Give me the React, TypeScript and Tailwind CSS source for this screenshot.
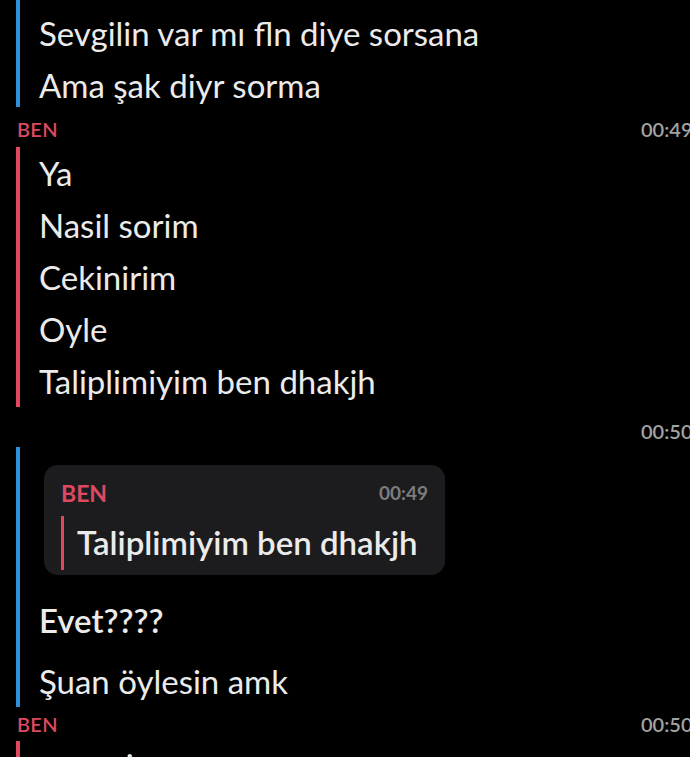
const font = { fontFamily: '"Lato", "Noto Sans", sans-serif' };

function Line({ children, bold = false }: { children: React.ReactNode; bold?: boolean }) {
  return (
    <div
      className={`h-[52px] flex items-center text-[33px] leading-none text-[#ebebeb] whitespace-nowrap ${bold ? "font-semibold" : "font-normal"}`}
    >
      {children}
    </div>
  );
}

function Header({ name, time, className = "" }: { name: string; time: string; className?: string }) {
  return (
    <div className={`flex items-center justify-between pl-[17px] ${className}`}>
      <span className="text-[20px] font-semibold text-[#dc4a61] tracking-[0.3px]">{name}</span>
      <span className="w-[56px] text-[20px] font-semibold text-[#a3a3a3]">{time}</span>
    </div>
  );
}

export default function App() {
  return (
    <div className="w-[690px] h-[757px] overflow-hidden bg-black" style={font}>
      <div className="w-[697px]">
        {/* earlier message group (other person) */}
        <div className="flex pl-[16px]">
          <div className="w-[4px] bg-[#2f8fd8] mb-[4px]" />
          <div className="pl-[19px] pt-[7px]">
            <Line>Sevgilin var mı fln diye sorsana</Line>
            <Line>Ama şak diyr sorma</Line>
          </div>
        </div>

        <Header name="BEN" time="00:49" className="h-[36px]" />

        <div className="flex pl-[16px]">
          <div className="w-[4px] bg-[#e0485f]" />
          <div className="pl-[19px]">
            <Line>Ya</Line>
            <Line>Nasil sorim</Line>
            <Line>Cekinirim</Line>
            <Line>Oyle</Line>
            <Line>Taliplimiyim ben dhakjh</Line>
          </div>
        </div>

        <Header name="" time="00:50" className="h-[40px] pt-[8px]" />

        <div className="flex pl-[16px]">
          <div className="w-[4px] bg-[#2f8fd8]" />
          <div className="pt-[18px]">
            {/* quoted reply */}
            <div className="ml-[24px] w-[401px] h-[110px] rounded-[14px] bg-[#1c1c1e] px-[17px] pt-[11px]">
              <div className="flex items-center justify-between">
                <span className="text-[23px] font-bold text-[#dc4a61]">BEN</span>
                <span className="text-[19px] font-bold text-[#7c7c7e]">00:49</span>
              </div>
              <div className="flex items-center mt-[5px]">
                <div className="w-[3px] h-[54px] bg-[#e0485f]" />
                <span className="ml-[13px] text-[33px] font-semibold text-[#ebebeb] whitespace-nowrap">
                  Taliplimiyim ben dhakjh
                </span>
              </div>
            </div>
            <div className="pl-[19px] mt-[19px]">
              <Line bold>Evet????</Line>
            </div>
            <div className="pl-[19px] mt-[9px]">
              <Line>Şuan öylesin amk</Line>
            </div>
          </div>
        </div>

        <Header name="BEN" time="00:50" className="h-[34px]" />

        <div className="flex pl-[16px]">
          <div className="w-[4px] bg-[#e0485f]" />
          <div className="pl-[19px] -mt-[2px]">
            <Line>ama niye</Line>
          </div>
        </div>
      </div>
    </div>
  );
}
